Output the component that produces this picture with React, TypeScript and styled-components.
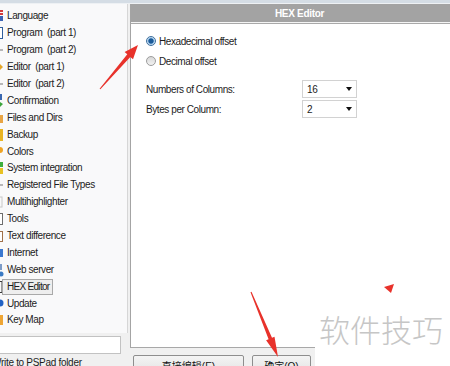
import styled, { createGlobalStyle } from "styled-components";

const GlobalStyle = createGlobalStyle`
  html, body {
    margin: 0;
    padding: 0;
    background: #ffffff;
  }
  body {
    font-family: "Liberation Sans", Arial, sans-serif;
  }
`;

const Screen = styled.div`
  position: relative;
  width: 450px;
  height: 366px;
  overflow: hidden;
  background: #f0f0f0;
  display: flex;
  flex-direction: column;
`;

const TopStrip = styled.div`
  flex-shrink: 0;
  height: 3px;
  background: #d5dde5;
  border-bottom: 1px solid #eef1f4;
`;

const Body = styled.div`
  display: flex;
  gap: 2px;
  flex: 1;
  min-height: 0;
`;

const Sidebar = styled.div`
  width: 128px;
  flex-shrink: 0;
  display: flex;
  flex-direction: column;
`;

const NavList = styled.ul`
  flex-shrink: 0;
  margin: 0;
  padding: 4px 0 0;
  list-style: none;
  height: 329px;
  box-sizing: border-box;
  background: #f9f9fa;
  border-right: 1px solid #d6d6d6;
`;

const NavRow = styled.li`
  display: flex;
  align-items: center;
  height: 16.9px;
`;

const IconSlot = styled.svg`
  flex-shrink: 0;
  width: 4px;
  height: 14px;
`;

const NavLabel = styled.span<{ $selected?: boolean }>`
  margin-left: -2px;
  padding: 1px 3px 1px 4px;
  border: 1px solid ${(p) => (p.$selected ? "#a9a9a9" : "transparent")};
  background: ${(p) => (p.$selected ? "#eeeeee" : "transparent")};
  font-size: 10px;
  letter-spacing: ${(p) => (p.$selected ? "-0.7px" : "-0.42px")};
  line-height: 12px;
  color: #1c1c1c;
  white-space: pre;
`;

const PathInput = styled.div`
  flex-shrink: 0;
  margin-top: 3px;
  width: 121px;
  height: 18px;
  box-sizing: border-box;
  background: #ffffff;
  border: 1px solid #c2c2c2;
  border-left: none;
`;

const CheckText = styled.div`
  flex-shrink: 0;
  margin: 3px 0 0 -8px;
  font-size: 10px;
  letter-spacing: -0.3px;
  line-height: 12px;
  color: #1c1c1c;
  white-space: nowrap;
`;

const MainColumn = styled.div`
  width: 338px;
  flex-shrink: 0;
  display: flex;
  flex-direction: column;
`;

const Panel = styled.section`
  flex-shrink: 0;
  height: 344px;
  box-sizing: border-box;
  display: flex;
  flex-direction: column;
  background: #ffffff;
  border-left: 1px solid #a4a4a4;
  border-bottom: 1px solid #a8a8a8;
`;

const PanelHeader = styled.header`
  height: 18px;
  flex-shrink: 0;
  display: flex;
  align-items: center;
  justify-content: center;
  background: #a3a3a3;
  border-bottom: 1px solid #f4f4f4;
  box-shadow: 0 1px 0 #a9a9a9;
  color: #ffffff;
  font-size: 10px;
  font-weight: bold;
  letter-spacing: -0.3px;
`;

const PanelBody = styled.div`
  padding: 8px 0 0 15px;
`;

const RadioRow = styled.label`
  display: flex;
  align-items: center;
  gap: 3px;
  height: 20px;
  font-size: 10px;
  letter-spacing: -0.42px;
  color: #1c1c1c;
`;

const RadioDot = styled.span<{ $checked?: boolean }>`
  width: 10px;
  height: 10px;
  box-sizing: border-box;
  border-radius: 50%;
  border: 1px solid ${(p) => (p.$checked ? "#3d6f9e" : "#9c9c9c")};
  background: ${(p) =>
    p.$checked
      ? "radial-gradient(circle, #1b5a98 0 2.3px, #7fb0dc 2.8px, #dce9f5 4px)"
      : "linear-gradient(#d8d8d8, #f2f2f2)"};
`;

const OptionGrid = styled.div`
  margin-top: 8px;
  display: grid;
  grid-template-columns: 156px 55px;
  grid-auto-rows: 20px;
  align-items: center;
  font-size: 10px;
  letter-spacing: -0.42px;
  color: #1c1c1c;
`;

const Combo = styled.div`
  height: 18px;
  box-sizing: border-box;
  display: flex;
  align-items: center;
  justify-content: space-between;
  padding: 0 4px 0 4px;
  border: 1px solid #d2d2d2;
  background: #ffffff;
  font-size: 10px;
`;

const ComboArrow = styled.span`
  width: 0;
  height: 0;
  border-left: 3.5px solid transparent;
  border-right: 3.5px solid transparent;
  border-top: 4px solid #111111;
`;

const ButtonRow = styled.div`
  flex-shrink: 0;
  display: flex;
  gap: 8px;
  padding: 7px 0 0 3px;
`;

const DialogButton = styled.button<{ $width: number }>`
  width: ${(p) => p.$width}px;
  height: 22px;
  padding: 1px 0 0;
  box-sizing: border-box;
  border: 1px solid #8e8e8e;
  border-radius: 2px;
  background: linear-gradient(#f4f4f4, #e0e0e0);
  font-family: "Liberation Sans", "Noto Sans CJK SC", sans-serif;
  font-size: 10px;
  line-height: 16px;
  color: #111111;
  align-self: flex-start;
`;

const Watermark = styled.div`
  position: absolute;
  right: 0;
  bottom: 0;
  width: 135px;
  height: 64px;
  box-sizing: border-box;
  padding: 9px 0 0 4px;
  background: #ffffff;
  font-family: "Noto Sans CJK SC", sans-serif;
  font-weight: 300;
  font-size: 31px;
  line-height: 36px;
  color: #c6c6c6;
  white-space: nowrap;
`;

const Annotations = styled.svg`
  position: absolute;
  inset: 0;
  width: 450px;
  height: 366px;
  pointer-events: none;
`;

type IconKind =
  | "lang"
  | "doc"
  | "dash"
  | "arrow"
  | "check"
  | "folder"
  | "backup"
  | "colors"
  | "system"
  | "light"
  | "tools"
  | "diff"
  | "internet"
  | "web"
  | "hex"
  | "update"
  | "keymap";

const NavIcon = ({ kind }: { kind: IconKind }) => {
  const shapes: Record<IconKind, JSX.Element> = {
    lang: (
      <>
        <rect x="0" y="1" width="3" height="2" fill="#d33a3a" />
        <rect x="0" y="4" width="3" height="2" fill="#d33a3a" />
        <rect x="0" y="7" width="3" height="5" fill="#3b62b4" />
      </>
    ),
    doc: <rect x="-2" y="1.5" width="4.5" height="11" fill="#fff" stroke="#2f5e9c" />,
    dash: <rect x="0" y="6.5" width="3" height="1" fill="#777" />,
    arrow: <polygon points="0,4 3,7 0,10" fill="#e4a62a" />,
    check: (
      <>
        <rect x="0" y="0" width="2" height="6" fill="#3a67b0" />
        <polygon points="0,8 3,10 0,13" fill="#3aa43a" />
      </>
    ),
    folder: <rect x="0" y="4" width="3" height="8" fill="#e8a444" />,
    backup: <rect x="0" y="1" width="3" height="12" fill="#e8b423" />,
    colors: <circle cx="0" cy="5" r="3" fill="#f0a424" />,
    system: (
      <>
        <rect x="0" y="1" width="3" height="5" fill="#3eae3e" />
        <rect x="0" y="7" width="3" height="6" fill="#e8c123" />
      </>
    ),
    light: <rect x="-2" y="2" width="4" height="10" fill="none" stroke="#c8c8c8" />,
    tools: <rect x="-2" y="1.5" width="4.5" height="11" fill="#fff" stroke="#6d6d6d" />,
    diff: <rect x="-2" y="2.5" width="4.5" height="10" fill="#fff" stroke="#a0704a" />,
    internet: <rect x="0" y="3" width="3" height="8" fill="#3b78d0" />,
    web: (
      <>
        <rect x="0" y="1" width="2" height="6" fill="#7d9cc8" />
        <circle cx="1" cy="11" r="2.5" fill="#3a7ac4" />
      </>
    ),
    hex: <rect x="-2" y="1.5" width="4" height="11" fill="none" stroke="#3a3a3a" />,
    update: <circle cx="0" cy="6" r="3.5" fill="#2262c4" />,
    keymap: <rect x="0" y="2" width="3" height="10" fill="#eea534" />,
  };
  return (
    <IconSlot viewBox="0 0 4 14" aria-hidden="true">
      {shapes[kind]}
    </IconSlot>
  );
};

const navItems: { label: string; icon: IconKind }[] = [
  { label: "Language", icon: "lang" },
  { label: "Program  (part 1)", icon: "doc" },
  { label: "Program  (part 2)", icon: "dash" },
  { label: "Editor  (part 1)", icon: "arrow" },
  { label: "Editor  (part 2)", icon: "dash" },
  { label: "Confirmation", icon: "check" },
  { label: "Files and Dirs", icon: "folder" },
  { label: "Backup", icon: "backup" },
  { label: "Colors", icon: "colors" },
  { label: "System integration", icon: "system" },
  { label: "Registered File Types", icon: "dash" },
  { label: "Multihighlighter", icon: "light" },
  { label: "Tools", icon: "tools" },
  { label: "Text difference", icon: "diff" },
  { label: "Internet", icon: "internet" },
  { label: "Web server", icon: "web" },
  { label: "HEX Editor", icon: "hex" },
  { label: "Update", icon: "update" },
  { label: "Key Map", icon: "keymap" },
];

const options = [
  { label: "Numbers of Columns:", value: "16" },
  { label: "Bytes per Column:", value: "2" },
];

export default function App() {
  return (
    <>
      <GlobalStyle />
      <Screen>
        <TopStrip />
        <Body>
          <Sidebar>
            <NavList>
              {navItems.map((item) => (
                <NavRow key={item.label}>
                  <NavIcon kind={item.icon} />
                  <NavLabel $selected={item.label === "HEX Editor"}>
                    {item.label}
                  </NavLabel>
                </NavRow>
              ))}
            </NavList>
            <PathInput />
            <CheckText>Write to PSPad folder</CheckText>
          </Sidebar>

          <MainColumn>
            <Panel>
              <PanelHeader>HEX Editor</PanelHeader>
              <PanelBody>
                <RadioRow>
                  <RadioDot $checked />
                  Hexadecimal offset
                </RadioRow>
                <RadioRow>
                  <RadioDot />
                  Decimal offset
                </RadioRow>
                <OptionGrid>
                  {options.flatMap((opt) => [
                    <span key={opt.label}>{opt.label}</span>,
                    <Combo key={opt.label + "-value"}>
                      {opt.value}
                      <ComboArrow />
                    </Combo>,
                  ])}
                </OptionGrid>
              </PanelBody>
            </Panel>
            <ButtonRow>
              <DialogButton $width={111}>直接编辑(E)</DialogButton>
              <DialogButton $width={59}>确定(O)</DialogButton>
            </ButtonRow>
          </MainColumn>
        </Body>

        <Watermark>软件技巧</Watermark>

        <Annotations viewBox="0 0 450 366" aria-hidden="true">
          <polygon
            points="100.4,89.3 130.3,56.9 133,59.2 138,45 124.6,52 127.3,54.3 99.6,88.7"
            fill="#e8322b"
          />
          <polygon
            points="251.5,291.8 272,337.8 274.5,336.8 278,357 266.1,340.2 268.6,339.2 250.5,292.2"
            fill="#e8322b"
          />
          <polygon points="384,287 394,284 391,293" fill="#e8322b" />
        </Annotations>
      </Screen>
    </>
  );
}
